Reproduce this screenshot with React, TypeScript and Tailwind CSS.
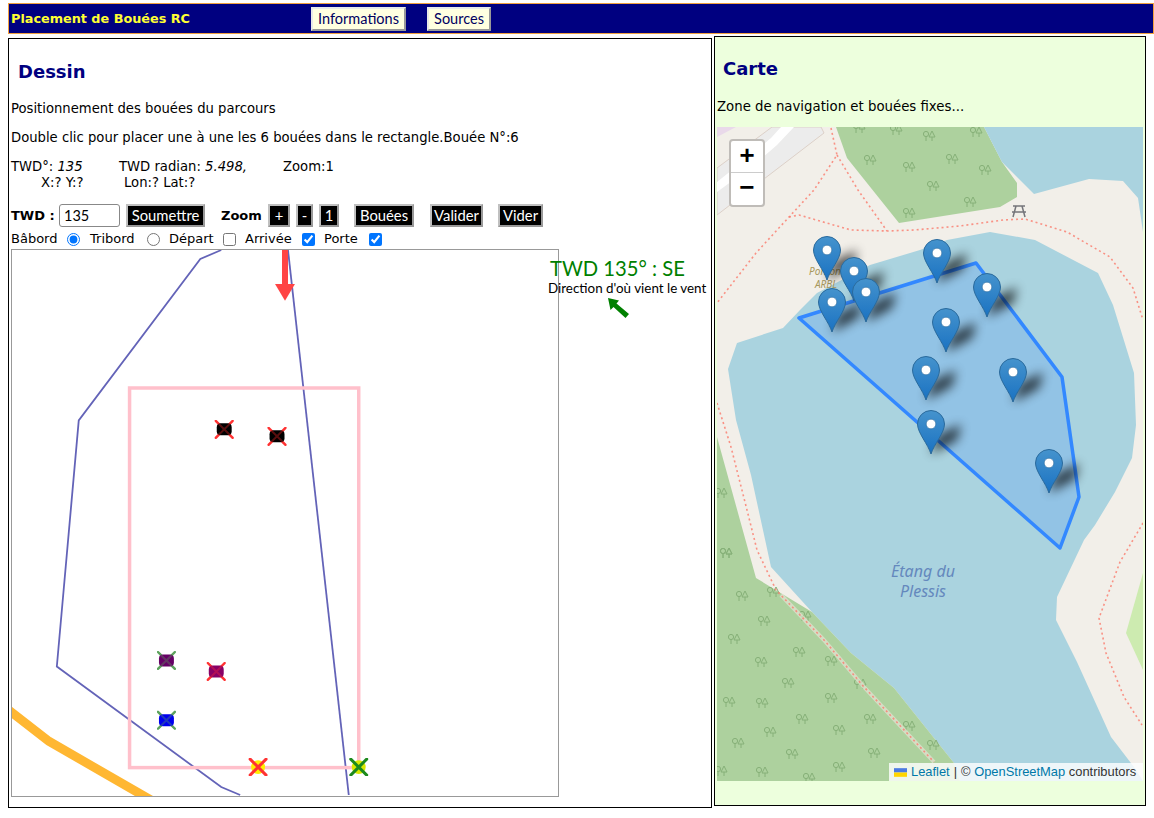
const verdana = "font-['DejaVu_Sans',sans-serif]";
const narrow = "font-['Lato',sans-serif]";

const buoys = [
  { x: 224, y: 429, fill: "#000000", cross: "#ff3333" },
  { x: 277, y: 436, fill: "#000000", cross: "#ff3333" },
  { x: 166, y: 661, fill: "#660066", cross: "#5da35d" },
  { x: 216, y: 672, fill: "#880066", cross: "#ff3333" },
  { x: 166, y: 721, fill: "#0000ee", cross: "#5da35d" },
];

const pins = [
  [827, 250],
  [854, 271],
  [832, 302],
  [866, 292],
  [937, 253],
  [987, 287],
  [946, 322],
  [926, 370],
  [1013, 372],
  [931, 424],
  [1049, 463],
];

const trees = [
  [859, 128], [896, 130], [929, 136], [976, 132], [870, 160], [909, 167], [952, 159], [985, 170],
  [933, 186], [970, 202], [909, 213], [721, 493], [726, 553],
  [726, 553], [742, 596], [773, 592], [805, 616], [764, 621], [734, 639], [799, 652], [761, 662],
  [831, 661], [860, 684], [788, 683], [729, 702], [762, 703], [831, 698], [802, 719], [870, 719],
  [909, 726], [770, 732], [839, 730], [738, 743], [933, 745], [792, 754], [874, 753], [721, 771],
  [762, 772], [839, 767], [809, 778],
];

const trails = [
  "M831 128 L837 155 L814 190 L789 217 L756 253 L717 303",
  "M789 217 L799 215 L851 230 L887 231 L914 230 L960 226 L1003 220 L1025 219 L1067 232 L1110 257 L1133 288 L1143 320",
  "M837 155 L858 190 L887 231",
  "M717 403 L731 447 L747 510 L757 550 L776 590 L824 640 L864 687 L934 762",
  "M1143 523 L1120 562 L1099 618 L1106 653 L1124 697 L1142 725",
];

function Tree({ x, y }: { x: number; y: number }) {
  return (
    <g transform={`translate(${x} ${y})`} fill="none" stroke="#86b078" strokeWidth="1">
      <circle cx="-3" cy="-2" r="2.6" />
      <path d="M-3 0.5V5" />
      <path d="M3 -5L6 1H0Z M3 1V5" />
    </g>
  );
}

function Pin({ x, y }: { x: number; y: number }) {
  return (
    <g transform={`translate(${x} ${y})`}>
      <path d="M0 30L6 12L30 0L26 16Z" fill="#000000" opacity="0.7" filter="url(#pinBlur)" />
      <path
        d="M0 30C-3 20 -13.5 9 -13.5 0A13.5 13.5 0 1 1 13.5 0C13.5 9 3 20 0 30Z"
        fill="url(#pinFill)"
        stroke="#2a6a9c"
        strokeWidth="1"
      />
      <circle cx="0" cy="0" r="4.8" fill="#ffffff" stroke="#2a6a9c" strokeWidth="0.6" />
    </g>
  );
}

function MapDrawing() {
  return (
    <svg viewBox="717 127 426 654" className="block h-[654px] w-[426px]">
      <defs>
        <linearGradient id="pinFill" x1="0" y1="0" x2="0" y2="1">
          <stop offset="0" stopColor="#4593cd" />
          <stop offset="1" stopColor="#1a72c2" />
        </linearGradient>
        <filter id="pinBlur" x="-80%" y="-80%" width="260%" height="260%">
          <feGaussianBlur stdDeviation="5.5" />
        </filter>
      </defs>
      <rect x="717" y="127" width="426" height="654" fill="#f2efe9" />
      <path d="M717 168L772 127H821L824 133L717 215Z" fill="#ececec" stroke="#dcd0c8" strokeWidth="1" />
      <path d="M717 127H736L717 137Z" fill="#e9d9ea" />
      <path d="M717 182L747 158L771 138L781 127H794L777 145L754 165L717 192Z" fill="#ffffff" />
      <path d="M836 127H984L1002 162L1017 183L1017 197L1000 207L899 223L847 158Z" fill="#add19e" />
      <path d="M984 127H1143V232L1138 198L1123 181L1089 179L1034 194L1002 162Z" fill="#aad3df" />
      <path
        d="M737 343L783 328L800 310L817 293L870 265L920 250L947 240L990 232L1035 240L1098 273L1113 305L1134 373L1136 425L1132 458L1115 492L1095 525L1084 540L1057 597L1056 620L1077 662L1111 737L1134 767L1143 781H960L954 763L894 688L851 653L812 612L771 567L751 475L736 420L728 369Z"
        fill="#aad3df"
      />
      <path d="M717 437L756 578L812 612L851 653L894 688L954 763L960 781H717Z" fill="#add19e" />
      <path d="M1143 573L1126 633L1143 670Z" fill="#cdebb0" />
      {trees.map(([x, y], i) => (
        <Tree key={i} x={x} y={y} />
      ))}
      <path d="M781 595L824 640L864 687L934 762" fill="none" stroke="#e6e2d4" strokeWidth="4" opacity="0.7" />
      {trails.map((d) => (
        <path key={d} d={d} fill="none" stroke="#fa8072" strokeWidth="1.6" strokeDasharray="2 3" opacity="0.85" />
      ))}
      <g stroke="#75757a" strokeWidth="1.5" fill="none">
        <path d="M1013 206H1025M1012 212H1026M1016 206L1013 217M1022 206L1025 217" />
      </g>
      <g fill="#a8985c" fontFamily="'Noto Sans',sans-serif" fontStyle="italic" fontSize="10" textAnchor="middle">
        <text x="825" y="275">Ponton</text>
        <text x="826" y="288">ARBL</text>
      </g>
      <g fill="#6488bd" fontFamily="'Noto Sans',sans-serif" fontStyle="italic" fontSize="16" textAnchor="middle">
        <text x="923" y="577">Étang du</text>
        <text x="923" y="597">Plessis</text>
      </g>
      <path
        d="M799 318L976 263L1062 377L1079 497L1060 548Z"
        fill="#3388ff"
        fillOpacity="0.2"
        stroke="#3388ff"
        strokeWidth="3.5"
        strokeLinejoin="round"
      />
      {pins.map(([x, y]) => (
        <Pin key={`${x}-${y}`} x={x} y={y} />
      ))}
    </svg>
  );
}

function CourseDrawing() {
  return (
    <svg viewBox="11 249 548 548" className="block h-[548px] w-[548px] border border-[#999999] bg-white">
      <defs>
        <filter id="soft" x="-5%" y="-5%" width="110%" height="110%">
          <feGaussianBlur stdDeviation="0.6" />
        </filter>
      </defs>
      <path d="M8 711L48 742L152 802" fill="none" stroke="#ffb733" strokeWidth="9" filter="url(#soft)" />
      <g fill="none" stroke="#6464b8" strokeWidth="1.8" filter="url(#soft)">
        <path d="M221 249L200 258L78 420L56 667L221 788L240 796" />
        <path d="M288 249L349 796" />
      </g>
      <rect x="129" y="387.5" width="230" height="381" fill="none" stroke="#ffc0cb" strokeWidth="3.5" filter="url(#soft)" />
      <path d="M285 249V285" stroke="#ff4444" strokeWidth="6" />
      <path d="M275 283H295L285 300Z" fill="#ff4444" />
      {buoys.map((b) => {
        const cross = `M${b.x - 8.5} ${b.y - 8.5}L${b.x + 8.5} ${b.y + 8.5}M${b.x + 8.5} ${b.y - 8.5}L${b.x - 8.5} ${b.y + 8.5}`;
        return (
          <g key={`${b.x}-${b.y}`} filter="url(#soft)">
            <path d={cross} stroke={b.cross} strokeWidth="2.4" strokeLinecap="round" />
            <rect x={b.x - 7.5} y={b.y - 6} width="15" height="12" rx="4" fill={b.fill} />
            <path d={cross} stroke={b.cross} strokeWidth="2" opacity="0.35" />
          </g>
        );
      })}
      <g filter="url(#soft)">
        <circle cx="258" cy="768" r="7" fill="#ffee00" />
        <path d="M250 760L266 776M266 760L250 776" stroke="#ff3333" strokeWidth="3" strokeLinecap="round" />
        <circle cx="359" cy="768" r="7" fill="#d8e800" />
        <path d="M351 760L367 776M367 760L351 776" stroke="#1f8a1f" strokeWidth="3" strokeLinecap="round" />
      </g>
    </svg>
  );
}

function NavButton({ label, className }: { label: string; className: string }) {
  return (
    <button
      className={`${narrow} h-[24px] border-2 border-t-[#e8e8e8] border-l-[#e8e8e8] border-r-[#999999] border-b-[#999999] bg-[#ffffe0] pt-[1px] text-[14.5px] leading-none text-[#000060] ${className}`}
    >
      {label}
    </button>
  );
}

function BlackButton({ label, className }: { label: string; className: string }) {
  return (
    <button
      className={`${narrow} h-[23px] border-2 border-[#c0c0c0] border-r-[#999999] border-b-[#999999] bg-black text-[14.8px] leading-none text-white ${className}`}
    >
      {label}
    </button>
  );
}

export default function App() {
  return (
    <div className={`${verdana} h-[818px] w-[1154px] overflow-hidden bg-white pt-[3px] pl-2 text-black`}>
      <header className="flex h-[31px] items-center border border-[#f0a040] bg-[#000080] pl-[2px]">
        <h1 className="mt-[1px] w-[300px] text-[12.8px] font-bold text-[#ffff33]">Placement de Bouées RC</h1>
        <NavButton label="Informations" className="w-[95px]" />
        <div className="w-[21px]" />
        <NavButton label="Sources" className="w-[64px]" />
      </header>

      <div className="mt-[2px] flex items-start gap-[2px]">
        <section className="relative mt-[2px] h-[770px] w-[704px] border border-black px-[2px] text-[13.2px]">
          <h2 className="mt-[21px] pl-[7px] text-[18px] leading-[24px] font-bold text-[#000080]">Dessin</h2>
          <p className="mt-[17px] leading-4">Positionnement des bouées du parcours</p>
          <p className="mt-[13px] leading-4">Double clic pour placer une à une les 6 bouées dans le rectangle.Bouée N°:6</p>
          <p className="mt-[13px] flex leading-4">
            <span className="w-[108px]">
              TWD°: <i>135</i>
            </span>
            <span className="w-[164px]">
              TWD radian: <i>5.498,</i>
            </span>
            <span>Zoom:1</span>
          </p>
          <p className="flex pl-[30px] leading-4">
            <span className="w-[83px]">X:? Y:?</span>
            <span>Lon:? Lat:?</span>
          </p>

          <div className="mt-[13px] flex h-[23px] items-center">
            <b className="w-[48px] text-[13px]">TWD :</b>
            <input
              defaultValue="135"
              className={`${narrow} h-[23px] w-[61px] rounded-[3px] border border-[#888888] px-[4px] text-[14.5px]`}
            />
            <BlackButton label="Soumettre" className="ml-[6px] w-[79px]" />
            <b className="ml-[16px] w-[47px] text-[13px]">Zoom</b>
            <BlackButton label="+" className="w-[22px]" />
            <BlackButton label="-" className="ml-[6px] w-[17px]" />
            <BlackButton label="1" className="ml-[6px] w-[20px]" />
            <BlackButton label="Bouées" className="ml-[15px] w-[60px]" />
            <BlackButton label="Valider" className="ml-[16px] w-[53px]" />
            <BlackButton label="Vider" className="ml-[15px] w-[45px]" />
          </div>

          <div className="mt-[4px] flex h-4 items-center text-[13px] leading-4">
            <span className="w-[56px]">Bâbord</span>
            <input type="radio" name="side" defaultChecked className="m-0 h-[13px] w-[13px]" />
            <span className="ml-[10px] w-[57px]">Tribord</span>
            <input type="radio" name="side" className="m-0 h-[13px] w-[13px]" />
            <span className="ml-[9px] w-[54px]">Départ</span>
            <input type="checkbox" className="m-0 h-[13px] w-[13px]" />
            <span className="ml-[9px] w-[57px]">Arrivée</span>
            <input type="checkbox" defaultChecked className="m-0 h-[13px] w-[13px]" />
            <span className="ml-[9px] w-[45px]">Porte</span>
            <input type="checkbox" defaultChecked className="m-0 h-[13px] w-[13px]" />
          </div>

          <div className="mt-[2px]">
            <CourseDrawing />
          </div>

          <div className={`${narrow} absolute top-[216px] left-[539px] w-[165px]`}>
            <p className="pl-[2px] text-[20.2px] leading-[26px] text-[#008000]">TWD 135° : SE</p>
            <p className="text-[13.4px] leading-[15px] whitespace-nowrap">Direction d'où vient le vent</p>
            <svg viewBox="0 0 24 22" className="mt-[1px] ml-[59px] h-[22px] w-[24px]">
              <path d="M1 1L12 3.5L9.5 6.5L22 17L18.5 21L6.5 10L3.5 13Z" fill="#008000" />
            </svg>
          </div>
        </section>

        <section className="h-[770px] w-[432px] border border-black bg-[#edffdd] px-[2px] text-[13.3px]">
          <h2 className="mt-[20px] pl-[6px] text-[18px] leading-[24px] font-bold text-[#000080]">Carte</h2>
          <p className="mt-[18px] leading-4">Zone de navigation et bouées fixes...</p>
          <div className="relative mt-[12px] h-[654px] w-[426px] overflow-hidden">
            <MapDrawing />
            <div className="absolute top-[12px] left-[12px] w-[36px] rounded-[4px] border-2 border-[#bfbcb8] bg-white text-black">
              <div className="flex h-[32px] items-center justify-center border-b border-[#cccccc] font-['Liberation_Mono',monospace] text-[26px] leading-none font-bold">
                +
              </div>
              <div className="flex h-[32px] items-center justify-center font-['Liberation_Mono',monospace] text-[26px] leading-none font-bold">
                −
              </div>
            </div>
            <div className="absolute right-0 bottom-0 flex h-[18px] w-[254px] items-center bg-white/80 pl-[5px] font-['Liberation_Sans',sans-serif] text-[12.9px] text-[#333333]">
              <svg viewBox="0 0 12 8" className="mr-[4px] h-[9px] w-[13px]">
                <path d="M0 0H12V4H0Z" fill="#4c7be1" />
                <path d="M0 4H12V8H0Z" fill="#ffd500" />
              </svg>
              <span className="text-[#0078a8]">Leaflet</span>
              <span className="mx-[4px]">|</span>
              <span>©&nbsp;</span>
              <span className="text-[#0078a8]">OpenStreetMap</span>
              <span>&nbsp;contributors</span>
            </div>
          </div>
        </section>
      </div>
    </div>
  );
}
